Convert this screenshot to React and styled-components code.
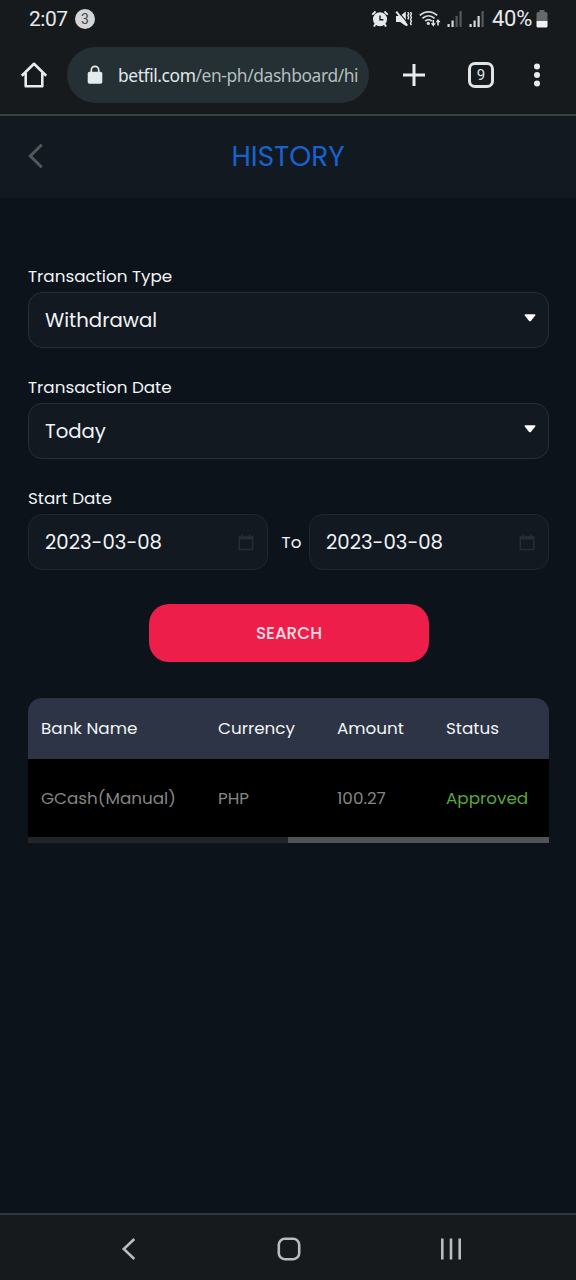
import React from "react";
import styled, { createGlobalStyle } from "styled-components";

const columns = [
    { title: "Bank Name", value: "GCash(Manual)" },
    { title: "Currency", value: "PHP" },
    { title: "Amount", value: "100.27" },
    { title: "Status", value: "Approved", approved: true }
];

const AlarmIcon = () => (
    <svg width="18" height="18" viewBox="0 0 18 18">
        <path d="M1.2 4.6 4.6 1.5M16.8 4.6l-3.4-3.1" stroke="#e6e9ea" strokeWidth="1.9" fill="none" />
        <path d="M4.4 14 3 16.6M13.6 14l1.4 2.6" stroke="#e6e9ea" strokeWidth="2" />
        <circle cx="9" cy="9.3" r="7" fill="#e6e9ea" />
        <path d="M9 5.4v4.4h3.4" stroke="#171a1d" strokeWidth="1.4" fill="none" />
    </svg>
);

const MuteIcon = () => (
    <svg width="18" height="18" viewBox="0 0 18 18">
        <path d="M1 6h4.2L10.800 1.500v14.500L5.200 12H1z" fill="#e6e9ea" />
        <path d="M2.800 1.200 12.400 12.600" stroke="#171a1d" strokeWidth="1.100" />
        <path d="M1.300 1.700 12.300 15.600" stroke="#e6e9ea" strokeWidth="1.900" />
        <path d="M12.800 2.200l.9 1.500-.9 1.900.9 1.900-.9 1.900M15.500 2.200l.9 1.500-.9 1.900.9 1.900-.9 1.900.9 1.900-.9 1.900.9 1.900" stroke="#e6e9ea" strokeWidth="1.400" fill="none" />
    </svg>
);

const WifiIcon = () => (
    <svg width="22" height="18" viewBox="0 0 22 18">
        <g fill="none" stroke="#d5d8d9" strokeWidth="1.800">
            <path d="M.8 5.400C5.800.6 13.200.6 18.200 5.400" />
            <path d="M3.400 8.400c3.700-3.500 8.500-3.500 12.200 0" />
            <path d="M6.200 11.200c2-1.900 4.600-1.900 6.600 0" />
        </g>
        <circle cx="9.300" cy="13.400" r="1.600" fill="#d5d8d9" />
        <path d="M14.300 10v4.500M19 15.500v-4" stroke="#e6e9ea" strokeWidth="1.500" />
        <path d="M11.800 13.300h5l-2.500 3.200zM16.700 12.300h4.800L19 9.100z" fill="#e6e9ea" />
    </svg>
);

const SignalIcon = ({ level }) => (
    <svg width="16" height="18" viewBox="0 0 16 18">
        {[3, 6.5, 11, 16].map((height, i) => (
            <rect key={height} x={0.5 + i * 4} y={17 - height} width="2.2" height={height} fill={i < level ? "#d5d8d9" : "#55595b"} />
        ))}
    </svg>
);

const BatteryIcon = () => (
    <svg width="12" height="18" viewBox="0 0 12 18">
        <path d="M3.500 0h5v2H10a1.500 1.500 0 0 1 1.500 1.500V11H.5V3.500A1.500 1.500 0 0 1 2 2h1.500z" fill="#66696b" />
        <path d="M.5 11h11v5a1.500 1.500 0 0 1-1.500 1.500H2A1.500 1.500 0 0 1 .5 16z" fill="#f0f2f3" />
    </svg>
);

const HomeIcon = () => (
    <svg width="28" height="28" viewBox="0 0 28 28" fill="none" stroke="#e8ecec" strokeWidth="2.600" strokeLinejoin="round">
        <path d="M1.800 14.800 14 2.800l12.200 12" />
        <path d="M5.700 12v13.200h16.600V12" />
    </svg>
);

const LockIcon = () => (
    <svg width="16" height="20" viewBox="0 0 16 20">
        <path d="M4.300 8V5a3.700 3.700 0 0 1 7.400 0v3" fill="none" stroke="#e4ebec" strokeWidth="1.700" />
        <rect x=".7" y="6.700" width="14.600" height="12" rx="1.800" fill="#e4ebec" />
    </svg>
);

const PlusIcon = () => (
    <svg width="24" height="24" viewBox="0 0 24 24">
        <path d="M12 1v22M1 12h22" stroke="#e8ecec" strokeWidth="3" />
    </svg>
);

const DotsIcon = () => (
    <svg width="8" height="24" viewBox="0 0 8 24" fill="#e8ecec">
        <circle cx="4" cy="3.600" r="3" />
        <circle cx="4" cy="12" r="3" />
        <circle cx="4" cy="20.400" r="3" />
    </svg>
);

const BackIcon = () => (
    <svg width="16" height="26" viewBox="0 0 16 26">
        <path d="M13.700 1.700 2.300 13l11.400 11.300" fill="none" stroke="#55585b" strokeWidth="3" />
    </svg>
);

const CaretIcon = () => (
    <svg width="12" height="8" viewBox="0 0 12 8">
        <path d="M1.300.3h9.400q1.200.2.500 1.300L7.100 6.700Q6 7.700 4.900 6.700L.8 1.600Q.1.500 1.300.3z" fill="#fff" />
    </svg>
);

const CalendarIcon = () => (
    <svg width="16" height="17" viewBox="0 0 16 17">
        <path d="M1.300 3h13.400v12.500H1.300z" fill="none" stroke="#282d32" strokeWidth="1.500" />
        <path d="M1 2.500h14v3H1zM3.500.5H5v2H3.500zM11 .5h1.500v2H11z" fill="#282d32" />
    </svg>
);

const Select = ({ label, value }) => (
    <Field>
        <Label>{label}</Label>
        <InputBox>
            <Value>{value}</Value>
            <CaretIcon />
        </InputBox>
    </Field>
);

const DateInput = ({ value }) => (
    <InputBox $date>
        <Value>{value}</Value>
        <CalendarIcon />
    </InputBox>
);

class App extends React.Component {
    render() {
        return (
            <Screen>
                <GlobalStyle />
                <StatusBar>
                    <Clock>2:07</Clock>
                    <Notice>3</Notice>
                    <StatusIcons>
                        <AlarmIcon />
                        <MuteIcon />
                        <WifiIcon />
                        <SignalIcon level={2} />
                        <SignalIcon level={3} />
                    </StatusIcons>
                    <Percent>40%</Percent>
                    <BatteryIcon />
                </StatusBar>
                <BrowserBar>
                    <HomeIcon />
                    <AddressBar>
                        <LockIcon />
                        <Address><b>betfil.com</b>/en-ph/dashboard/hi</Address>
                    </AddressBar>
                    <BrowserActions>
                        <PlusIcon />
                        <TabCount>9</TabCount>
                        <DotsIcon />
                    </BrowserActions>
                </BrowserBar>
                <PageHeader>
                    <BackIcon />
                    <Title>HISTORY</Title>
                </PageHeader>
                <Content>
                    <Select label="Transaction Type" value="Withdrawal" />
                    <Select label="Transaction Date" value="Today" />
                    <Field>
                        <Label>Start Date</Label>
                        <DateRange>
                            <DateInput value="2023-03-08" />
                            <To>To</To>
                            <DateInput value="2023-03-08" />
                        </DateRange>
                    </Field>
                    <SearchButton>SEARCH</SearchButton>
                    <TableWrapper>
                        <HeadRow>
                            {columns.map(col => (
                                <Cell key={col.title}>{col.title}</Cell>
                            ))}
                        </HeadRow>
                        <BodyRow>
                            {columns.map(col => (
                                <Cell key={col.title} $approved={col.approved}>{col.value}</Cell>
                            ))}
                        </BodyRow>
                        <ScrollTrack><ScrollThumb /></ScrollTrack>
                    </TableWrapper>
                </Content>
                <NavBar>
                    <svg width="16" height="24" viewBox="0 0 16 24">
                        <path d="M13.300 2 2.800 12l10.500 10" fill="none" stroke="#b9bcbe" strokeWidth="2.600" />
                    </svg>
                    <svg width="24" height="24" viewBox="0 0 24 24">
                        <rect x="1.800" y="1.800" width="20.400" height="20.400" rx="6" fill="none" stroke="#b9bcbe" strokeWidth="2.600" />
                    </svg>
                    <svg width="22" height="24" viewBox="0 0 22 24">
                        <path d="M2.300 1.500v21M11 1.500v21M19.700 1.500v21" stroke="#b9bcbe" strokeWidth="2.600" />
                    </svg>
                </NavBar>
            </Screen>
        )
    }
}

const GlobalStyle = createGlobalStyle`
    body{
        margin: 0;
        background: #0c131b;
    }
    *{
        box-sizing: border-box;
    }
    svg{
        display: block;
        flex-shrink: 0;
    }
`
const Screen = styled.div`
    width: 576px;
    height: 1280px;
    display: flex;
    flex-direction: column;
    overflow: hidden;
    background: #0c131b;
    color: #f1f4f6;
    font-family: Poppins, Inter, sans-serif;
`
const StatusBar = styled.div`
    height: 37px;
    display: flex;
    align-items: center;
    padding: 0 28px 0 29px;
    background: #171a1d;
    color: #e6e9ea;
    font-family: Roboto, sans-serif;
`
const Clock = styled.span`
    width: 46px;
    font-size: 21px;
    letter-spacing: -0.5px;
`
const Notice = styled.span`
    width: 20px;
    height: 20px;
    border-radius: 50%;
    background: #d3d5d6;
    color: #44474a;
    font-size: 14px;
    line-height: 20px;
    text-align: center;
`
const StatusIcons = styled.div`
    display: flex;
    align-items: center;
    gap: 6px;
    margin-left: auto;
    padding-right: 7px;
`
const Percent = styled.span`
    width: 44px;
    font-size: 22px;
    letter-spacing: -0.3px;
`
const BrowserBar = styled.div`
    height: 79px;
    display: flex;
    align-items: center;
    padding: 0 35px 2px 20px;
    background: #171a1d;
    border-bottom: 2px solid #3a4142;
`
const AddressBar = styled.div`
    width: 302px;
    height: 56px;
    display: flex;
    align-items: center;
    gap: 15px;
    margin-left: 19px;
    padding-left: 20px;
    border-radius: 28px;
    background: #243033;
`
const Address = styled.span`
    color: #b4bebf;
    font-family: "Noto Sans", sans-serif;
    font-size: 17.4px;
    letter-spacing: -0.4px;
    white-space: nowrap;
    b{
        color: #e1e8e9;
        font-weight: 400;
    }
`
const BrowserActions = styled.div`
    flex: 1;
    display: flex;
    align-items: center;
    justify-content: space-between;
    padding-left: 33px;
`
const TabCount = styled.div`
    width: 26px;
    height: 26px;
    margin-left: 3px;
    border: 3px solid #dfe4e4;
    border-radius: 7px;
    color: #dfe4e4;
    font: 15px/20px Roboto, sans-serif;
    text-align: center;
`
const PageHeader = styled.div`
    height: 82px;
    display: grid;
    grid-template-columns: 24px 1fr 24px;
    align-items: center;
    padding: 0 28px 2px;
    background: #121921;
`
const Title = styled.h1`
    margin: 0;
    padding-top: 2px;
    color: #1762cc;
    font-size: 28px;
    font-weight: 400;
    text-align: center;
`
const Content = styled.div`
    flex: 1;
    display: flex;
    flex-direction: column;
    padding: 66px 27px 0 28px;
`
const Field = styled.div`
    height: 111px;
`
const Label = styled.div`
    height: 28px;
    font-size: 16.8px;
    line-height: 25px;
`
const InputBox = styled.div`
    width: ${props => props.$date ? "240px" : "100%"};
    height: 56px;
    display: flex;
    align-items: center;
    justify-content: space-between;
    padding: 0 ${props => props.$date ? "13px" : "12px"} 0 16px;
    border: 1px solid ${props => props.$date ? "#20272e" : "#272e36"};
    border-radius: 14px;
    background: #121921;
    svg{
        margin-top: ${props => props.$date ? "0" : "-4px"};
    }
`
const Value = styled.span`
    font-size: 19.7px;
`
const DateRange = styled.div`
    display: flex;
    align-items: center;
    justify-content: space-between;
`
const To = styled.span`
    font-size: 16.8px;
    padding-left: 6px;
`
const SearchButton = styled.button`
    width: 280px;
    height: 58px;
    margin: 7px 0 0 121px;
    border: 0;
    border-radius: 20px;
    background: #ed1e49;
    color: #fbdbe2;
    font-family: inherit;
    font-size: 16.8px;
    font-weight: 500;
`
const TableWrapper = styled.div`
    margin-top: 36px;
    border-radius: 14px 14px 0 0;
    overflow: hidden;
`
const HeadRow = styled.div`
    height: 61px;
    display: grid;
    grid-template-columns: 177px 119px 109px 1fr;
    align-items: center;
    padding-bottom: 2px;
    background: #2c3445;
`
const BodyRow = styled(HeadRow)`
    height: 78px;
    padding-bottom: 0;
    background: #000;
    color: #858585;
`
const Cell = styled.div`
    padding-left: 13px;
    font-size: 16.8px;
    ${props => props.$approved && "color: #57a836;"}
`
const ScrollTrack = styled.div`
    height: 6px;
    background: #222426;
`
const ScrollThumb = styled.div`
    width: 261px;
    height: 6px;
    margin-left: auto;
    background: #525355;
`
const NavBar = styled.div`
    height: 67px;
    display: flex;
    align-items: center;
    justify-content: space-between;
    padding: 2px 114px 0 121px;
    border-top: 2px solid #32373e;
    background: #171a1d;
`
export default App;
